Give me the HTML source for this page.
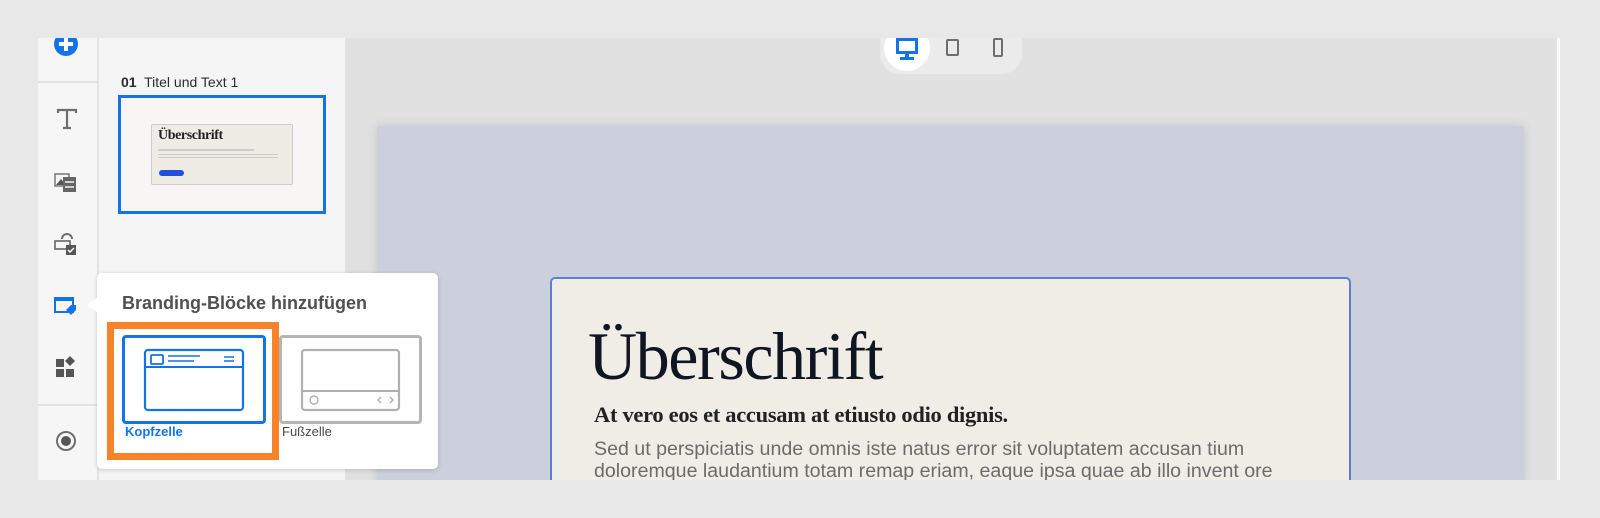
<!DOCTYPE html>
<html><head><meta charset="utf-8"><style>
*{margin:0;padding:0;box-sizing:border-box}
body{width:1600px;height:518px;background:#e8e8e8;position:relative;overflow:hidden;font-family:"Liberation Sans",sans-serif}
.abs{position:absolute}
</style></head><body>
<!-- rail -->
<div class="abs" style="left:38px;top:38px;width:61px;height:442px;background:#f6f6f6;border-right:2px solid #e4e4e4"></div>
<div class="abs" style="left:38px;top:81px;width:59px;height:2px;background:#e3e3e3"></div>
<div class="abs" style="left:38px;top:404px;width:59px;height:2px;background:#e3e3e3"></div>
<!-- panel -->
<div class="abs" style="left:99px;top:38px;width:246px;height:442px;background:#f5f5f5"></div>
<!-- canvas -->
<div class="abs" style="left:345px;top:38px;width:1212px;height:442px;background:#e1e1e1;overflow:hidden">
  <div class="abs" style="left:32px;top:88px;width:1147px;height:360px;background:#cbd0dc;box-shadow:0 0 10px rgba(0,0,0,.12)"></div>
  <div class="abs" style="left:205px;top:239px;width:801px;height:240px;background:#f0ede6;border:2px solid #5b7fd6;border-radius:5px"></div>
  <div class="abs" style="left:243px;top:280px;font-family:'Liberation Serif',serif;font-size:68px;letter-spacing:-1.4px;color:#101522;line-height:76px">Überschrift</div>
  <div class="abs" style="left:249px;top:364px;font-family:'Liberation Serif',serif;font-weight:bold;font-size:22.5px;letter-spacing:-0.3px;color:#222">At vero eos et accusam at etiusto odio dignis.</div>
  <div class="abs" style="left:249px;top:400px;font-size:19.6px;color:#6b6b6b;line-height:22px;width:760px">Sed ut perspiciatis unde omnis iste natus error sit voluptatem accusan tium<br>doloremque laudantium totam remap eriam, eaque ipsa quae ab illo invent ore</div>
</div>
<div class="abs" style="left:1557px;top:38px;width:3px;height:442px;background:#fafafa"></div>
<!-- device pill -->
<div class="abs" style="left:880px;top:20px;width:142px;height:54px;border-radius:20px;background:#ebebeb"></div>
<div class="abs" style="left:884px;top:25px;width:46px;height:46px;border-radius:23px;background:#fff"></div>
<svg class="abs" style="left:0;top:0" width="1600" height="100">
<rect x="896" y="38" width="22" height="16" fill="#1473e6"/><rect x="899" y="41" width="16" height="10" fill="#fff"/>
<rect x="905" y="54" width="4" height="4" fill="#1473e6"/><rect x="900" y="57" width="14" height="3" fill="#1473e6"/>
<rect x="947" y="40" width="11" height="15" rx="1" fill="none" stroke="#6e6e6e" stroke-width="2"/>
<rect x="994" y="39" width="8" height="17" rx="1" fill="none" stroke="#6e6e6e" stroke-width="2"/>
</svg>
<!-- panel content -->
<div class="abs" style="left:116px;top:22px;font-size:15px;font-weight:bold;color:#333">Slides</div>
<div class="abs" style="left:38px;top:0;width:1519px;height:38px;background:#e8e8e8"></div>
<div class="abs" style="left:121px;top:74px;font-size:14px;color:#2c2c2c"><b>01</b>&nbsp; Titel und Text 1</div>
<div class="abs" style="left:118px;top:95px;width:208px;height:119px;border:3px solid #1473e6;background:#f7f6f4"></div>
<div class="abs" style="left:151px;top:124px;width:142px;height:61px;background:#efece6;border:1px solid #c9cbd8;border-radius:2px"></div>
<div class="abs" style="left:158px;top:128px;font-family:'Liberation Serif',serif;font-weight:bold;font-size:14px;letter-spacing:-0.4px;color:#222">Überschrift</div>
<div class="abs" style="left:158px;top:149px;width:96px;height:2px;background:#ccc"></div>
<div class="abs" style="left:158px;top:154px;width:120px;height:6px;background:repeating-linear-gradient(#ccc 0 1px,transparent 1px 3px)"></div>
<div class="abs" style="left:159px;top:170px;width:25px;height:6px;border-radius:3px;background:#2250d8"></div>
<!-- rail icons -->
<svg class="abs" style="left:38px;top:38px" width="60" height="442">
<circle cx="28" cy="6" r="12" fill="#1473e6"/><rect x="26" y="-1" width="4" height="14" fill="#fff"/><rect x="21" y="4" width="14" height="4" fill="#fff"/>
<g transform="translate(0,4)"><path d="M20 71v-3h18v3M29 68v18M25 86h8" stroke="#6e6e6e" stroke-width="2.2" fill="none"/></g>
<g transform="translate(0,3)"><rect x="17" y="133" width="14" height="12" fill="none" stroke="#777" stroke-width="1.5"/><path d="M18 144l5-6 5 6z" fill="#555"/>
<rect x="25" y="136" width="13" height="15" fill="#666"/><path d="M27 141h9M27 146h9" stroke="#f6f6f6" stroke-width="1.5"/></g>
<g transform="translate(0,4)"><path d="M24 197a5 5 0 0 1 10 0" stroke="#6e6e6e" stroke-width="2" fill="none"/><rect x="17" y="199" width="15" height="8" fill="none" stroke="#6e6e6e" stroke-width="1.7"/>
<rect x="28" y="203" width="10" height="10" fill="#555"/><path d="M30 208l2 2 4-4" stroke="#fff" stroke-width="1.5" fill="none"/></g>
<g transform="translate(0,4)"><rect x="17" y="256" width="18" height="14" fill="none" stroke="#1473e6" stroke-width="2"/><rect x="17" y="256" width="18" height="3" fill="#1473e6"/>
<path d="M28 268l5-5h5v5l-5 5z" fill="#1473e6"/></g>
<rect x="18" y="321" width="8" height="8" fill="#555"/><rect x="18" y="331" width="8" height="8" fill="#555"/><rect x="28" y="331" width="8" height="8" fill="#555"/>
<path d="M32 318l5 5-5 5-5-5z" fill="#555"/>
<circle cx="28" cy="403" r="9" fill="none" stroke="#6e6e6e" stroke-width="2"/><circle cx="28" cy="403" r="5" fill="#555"/>
</svg>
<!-- popup -->
<div class="abs" style="left:97px;top:273px;width:341px;height:196px;background:#fff;border-radius:5px;box-shadow:0 1px 5px rgba(0,0,0,.18)"></div>
<div class="abs" style="left:87px;top:297px;width:0;height:0;border-top:8px solid transparent;border-bottom:8px solid transparent;border-right:11px solid #fff"></div>
<div class="abs" style="left:122px;top:293px;font-size:18px;font-weight:bold;color:#505050">Branding-Blöcke hinzufügen</div>
<div class="abs" style="left:107px;top:322px;width:172px;height:138px;border:7px solid #f7822a"></div>
<div class="abs" style="left:122px;top:335px;width:144px;height:89px;border:3px solid #1473e6;border-radius:4px"></div>
<div class="abs" style="left:279px;top:335px;width:143px;height:89px;border:3px solid #b5b5b5;border-radius:4px"></div>
<svg class="abs" style="left:0;top:0" width="440" height="480">
<rect x="145" y="350" width="98" height="60" rx="3" fill="none" stroke="#1473e6" stroke-width="2.2"/>
<path d="M145 367h98" stroke="#1473e6" stroke-width="2"/>
<rect x="151" y="355" width="12" height="9" rx="1" fill="none" stroke="#1473e6" stroke-width="1.8"/>
<path d="M168 356h32M168 361h26M224 357h10M224 361h10" stroke="#1473e6" stroke-width="1.6"/>
<rect x="302" y="350" width="97" height="60" rx="3" fill="none" stroke="#b0b0b0" stroke-width="2.2"/>
<path d="M302 391h97" stroke="#b0b0b0" stroke-width="2"/>
<circle cx="314" cy="400" r="4" fill="none" stroke="#b0b0b0" stroke-width="1.4"/>
<path d="M381 397l-3 3 3 3M390 397l3 3-3 3" stroke="#b0b0b0" stroke-width="1.4" fill="none"/>
</svg>
<div class="abs" style="left:125px;top:424px;font-size:13px;font-weight:bold;color:#1473e6">Kopfzelle</div>
<div class="abs" style="left:282px;top:424px;font-size:13px;color:#4b4b4b">Fußzelle</div>
</body></html>
